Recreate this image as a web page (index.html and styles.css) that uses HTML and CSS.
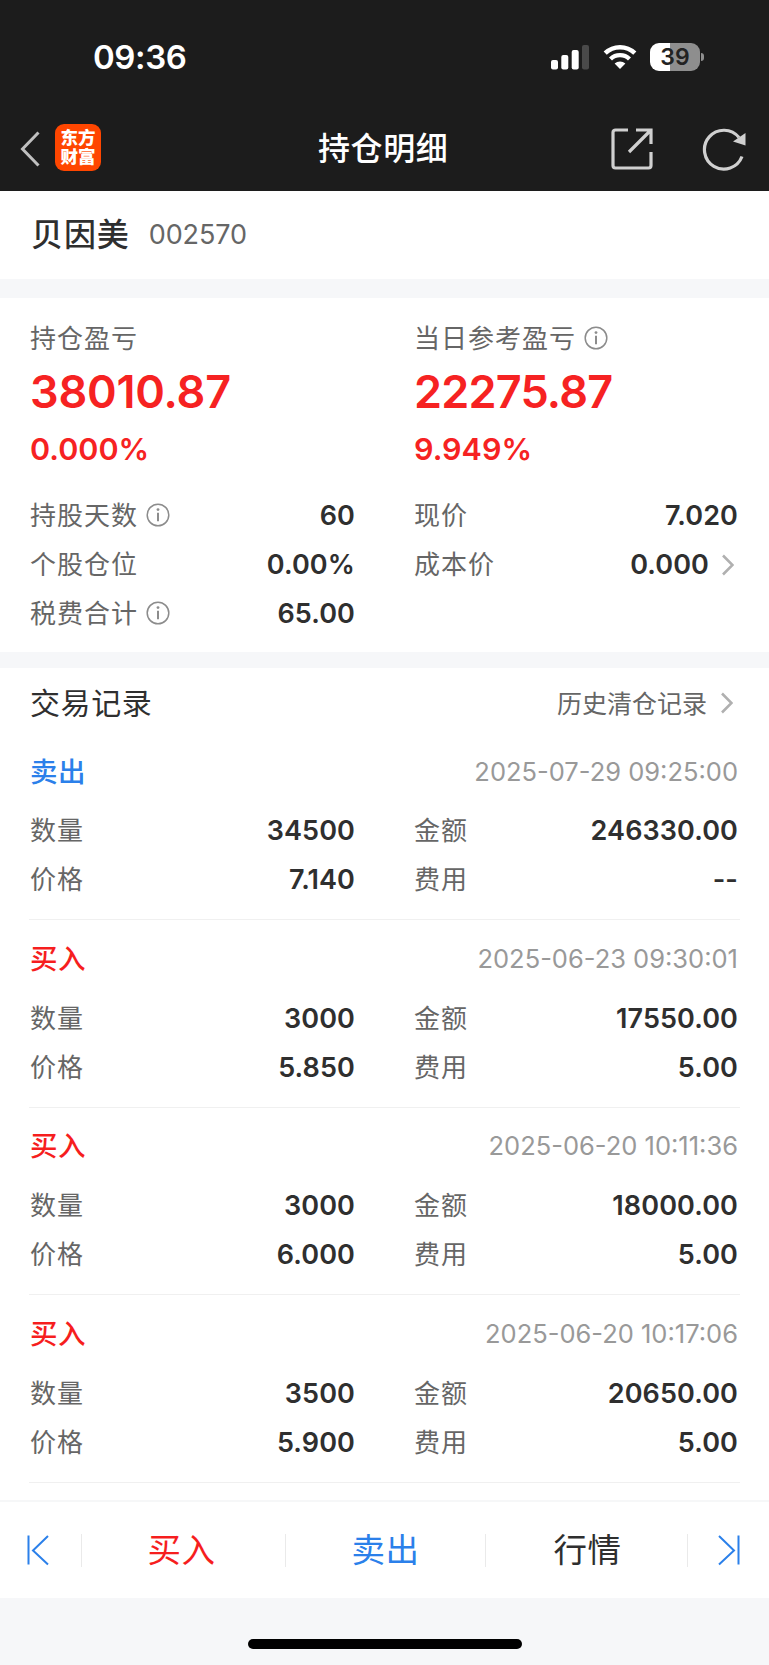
FILE: index.html
```html
<!DOCTYPE html>
<html lang="zh-CN">
<head>
<meta charset="utf-8">
<title>持仓明细</title>
<link rel="stylesheet" href="styles.css">
</head>
<body>
<svg class="defs" width="0" height="0">
  <symbol id="info" viewBox="0 0 24 24">
    <circle cx="12" cy="12" r="10.8" fill="none" stroke="#8c8c8c" stroke-width="1.5"/>
    <circle cx="12" cy="6.6" r="1.4" fill="#8c8c8c"/>
    <path d="M12 9.800v8.400" stroke="#8c8c8c" stroke-width="2" fill="none"/>
  </symbol>
  <symbol id="chev" viewBox="0 0 12 22">
    <path d="M1 1.500L10.500 11L1 20.500" fill="none" stroke="#b0b0b0" stroke-width="2.600"/>
  </symbol>
</svg>
<header class="top">
  <div class="status">
    <span class="time">09:36</span>
    <svg class="signal" width="40" height="26" viewBox="0 0 40 26">
      <rect x="1" y="16" width="7" height="9.500" rx="2" fill="#fff"/>
      <rect x="11.300" y="11" width="7" height="14.500" rx="2" fill="#fff"/>
      <rect x="21.700" y="6" width="7" height="19.500" rx="2" fill="#fff"/>
      <rect x="32" y="1" width="7" height="24.500" rx="2" fill="#4a4a4a"/>
    </svg>
    <svg class="wifi" width="34" height="26" viewBox="0 0 34 26">
      <path d="M2.200 9.200a21.300 21.300 0 0 1 29.600 0" fill="none" stroke="#fff" stroke-width="4.500"/>
      <path d="M7.500 15a13.600 13.600 0 0 1 19 0" fill="none" stroke="#fff" stroke-width="4.300"/>
      <path d="M11.600 19.500a8 8 0 0 1 10.800 0L17 25z" fill="#fff"/>
    </svg>
    <div class="battery"><span class="level">39</span><i class="cap"></i></div>
  </div>
  <nav class="nav">
    <svg class="back" width="22" height="36" viewBox="0 0 22 36"><path d="M19.500 1.500L3.500 18L19.500 34.500" fill="none" stroke="#c0c0c0" stroke-width="3"/></svg>
    <div class="logo"><span>东方</span><span>财富</span></div>
    <h1 class="title">持仓明细</h1>
    <svg class="share" width="44" height="44" viewBox="0 0 44 44">
      <path d="M18 3H5.500A2.500 2.500 0 0 0 3 5.500V38.500A2.500 2.500 0 0 0 5.500 41H38.500A2.500 2.500 0 0 0 41 38.500V25M26 3H41V17M40 4L19 25" fill="none" stroke="#d0d0d0" stroke-width="3.200"/>
    </svg>
    <svg class="reload" width="46" height="46" viewBox="0 0 46 46">
      <path d="M41 30.500A19.400 19.400 0 1 1 38 11.500" fill="none" stroke="#d0d0d0" stroke-width="3.200"/>
      <path d="M44.500 7V19.500L32 15.500z" fill="#d0d0d0"/>
    </svg>
  </nav>
</header>

<section class="stock"><span class="name">贝因美</span><span class="code">002570</span></section>

<section class="summary">
  <div class="cols">
    <div class="col">
      <div class="lab">持仓盈亏</div>
      <div class="big">38010.87</div>
      <div class="pct">0.000%</div>
      <div class="row"><span class="lab">持股天数<svg class="info"><use href="#info"/></svg></span><b class="val">60</b></div>
      <div class="row"><span class="lab">个股仓位</span><b class="val">0.00%</b></div>
      <div class="row"><span class="lab">税费合计<svg class="info"><use href="#info"/></svg></span><b class="val">65.00</b></div>
    </div>
    <div class="col">
      <div class="lab">当日参考盈亏<svg class="info"><use href="#info"/></svg></div>
      <div class="big day">22275.87</div>
      <div class="pct">9.949%</div>
      <div class="row"><span class="lab">现价</span><b class="val">7.020</b></div>
      <div class="row"><span class="lab">成本价</span><b class="val">0.000<svg class="chev"><use href="#chev"/></svg></b></div>
    </div>
  </div>
</section>

<main class="records">
  <div class="head"><h2>交易记录</h2><span class="more"><span class="link">历史清仓记录</span><svg class="chev"><use href="#chev"/></svg></span></div>
  <article class="rec">
    <div class="rhead"><span class="side sell">卖出</span><time>2025-07-29 09:25:00</time></div>
    <div class="cols">
      <div class="col"><div class="row"><span class="lab">数量</span><b class="val">34500</b></div><div class="row"><span class="lab">价格</span><b class="val">7.140</b></div></div>
      <div class="col"><div class="row"><span class="lab">金额</span><b class="val">246330.00</b></div><div class="row"><span class="lab">费用</span><b class="val">--</b></div></div>
    </div>
  </article>
  <article class="rec">
    <div class="rhead"><span class="side buy">买入</span><time>2025-06-23 09:30:01</time></div>
    <div class="cols">
      <div class="col"><div class="row"><span class="lab">数量</span><b class="val">3000</b></div><div class="row"><span class="lab">价格</span><b class="val">5.850</b></div></div>
      <div class="col"><div class="row"><span class="lab">金额</span><b class="val">17550.00</b></div><div class="row"><span class="lab">费用</span><b class="val">5.00</b></div></div>
    </div>
  </article>
  <article class="rec">
    <div class="rhead"><span class="side buy">买入</span><time>2025-06-20 10:11:36</time></div>
    <div class="cols">
      <div class="col"><div class="row"><span class="lab">数量</span><b class="val">3000</b></div><div class="row"><span class="lab">价格</span><b class="val">6.000</b></div></div>
      <div class="col"><div class="row"><span class="lab">金额</span><b class="val">18000.00</b></div><div class="row"><span class="lab">费用</span><b class="val">5.00</b></div></div>
    </div>
  </article>
  <article class="rec">
    <div class="rhead"><span class="side buy">买入</span><time>2025-06-20 10:17:06</time></div>
    <div class="cols">
      <div class="col"><div class="row"><span class="lab">数量</span><b class="val">3500</b></div><div class="row"><span class="lab">价格</span><b class="val">5.900</b></div></div>
      <div class="col"><div class="row"><span class="lab">金额</span><b class="val">20650.00</b></div><div class="row"><span class="lab">费用</span><b class="val">5.00</b></div></div>
    </div>
  </article>
</main>

<footer class="bar">
  <div class="edge left"><svg width="24" height="32" viewBox="0 0 24 32"><path d="M2.500 1.500V30.500M22 2L7 16.500L22 30.500" fill="none" stroke="#2b80ea" stroke-width="2"/></svg></div>
  <i class="sep"></i><div class="act first buy">买入</div>
  <i class="sep"></i><div class="act sell">卖出</div>
  <i class="sep"></i><div class="act last">行情</div>
  <i class="sep"></i>
  <div class="edge right"><svg width="24" height="32" viewBox="0 0 24 32"><path d="M21.500 1.500V30.500M2 2L17 16.500L2 30.500" fill="none" stroke="#2b80ea" stroke-width="2"/></svg></div>
</footer>
<div class="home"><i></i></div>
</body>
</html>
```
FILE: styles.css
```css
* { box-sizing: border-box; }
body {
  margin: 0;
  width: 769px;
  height: 1665px;
  overflow: hidden;
  display: flex;
  flex-direction: column;
  background: #fff;
  color: #2f2f2f;
  font-family: Inter, "Noto Sans CJK SC", sans-serif;
}
svg { display: block; flex: none; }
.defs { position: absolute; }
.top { height: 191px; background: #1c1c1c; color: #fff; flex: none; }
.status { height: 107px; padding: 7px 69px 0 93px; display: flex; align-items: center; }
.time { font-size: 33px; font-weight: 600; letter-spacing: -0.4px; margin-right: auto; }
.signal { margin-right: 13px; }
.wifi { margin-right: 13px; }
.battery {
  position: relative;
  width: 50px;
  height: 28px;
  border-radius: 9px;
  background: linear-gradient(90deg, #fff 0 20px, #8e8e8e 20px);
  display: flex;
  align-items: center;
  justify-content: center;
  color: #222;
  font-size: 23px;
  font-weight: 600;
}
.cap { position: absolute; left: 51px; top: 10px; width: 3px; height: 8px; border-radius: 0 4px 4px 0; background: #8e8e8e; }
.nav { height: 84px; padding: 0 22px 1px 19px; display: flex; align-items: center; }
.back { margin-right: 14px; }
.logo {
  width: 46px;
  height: 47px;
  margin-bottom: 2px;
  border-radius: 9px;
  background: #ff4600;
  display: flex;
  flex-direction: column;
  align-items: center;
  justify-content: center;
  padding-bottom: 2px;
  font-size: 17.500px;
  line-height: 19px;
  font-weight: 900;
}
.logo span { height: 19px; }
.title { margin: 1px auto 0 217px; font-size: 32px; line-height: 40px; font-weight: 500; letter-spacing: .6px; }
.share { margin-right: 47px; }
.stock { height: 88px; flex: none; display: flex; align-items: center; padding-left: 31px; }
.name { padding-bottom: 6px; font-size: 32px; font-weight: 500; letter-spacing: .9px; }
.code { padding-bottom: 2px; margin-left: 19px; font-size: 27px; letter-spacing: -.1px; color: #666; }
.summary { height: 389px; flex: none; border: solid #f6f7f9; border-width: 19px 0 16px; padding: 20px 30px 0; }
.cols { display: flex; gap: 59px; }
.col { width: 325px; }
.col + .col { width: 324px; }
.lab { display: flex; align-items: center; height: 40px; padding-bottom: 4px; font-size: 26px; letter-spacing: 1px; color: #666; }
.info { width: 24px; height: 24px; margin: 3px 0 0 8px; }
.big { height: 68px; line-height: 68px; font-size: 45px; font-weight: 600; letter-spacing: -.2px; color: #f62222; }
.day { letter-spacing: -.8px; }
.pct { height: 65px; line-height: 46px; font-size: 30.500px; font-weight: 600; color: #f62222; }
.row { height: 49px; display: flex; align-items: center; justify-content: space-between; }
.val { display: flex; align-items: center; font-size: 27px; font-weight: 600; letter-spacing: .1px; }
.chev { width: 12px; height: 22px; margin: 0 4px 0 13px; }
.records { height: 832px; flex: none; padding: 0 29px; }
.head { height: 72px; padding: 0 1px 2px; display: flex; align-items: center; justify-content: space-between; }
.head h2 { margin: 0; padding-bottom: 4px; font-size: 30px; font-weight: 400; letter-spacing: .6px; }
.more { display: flex; align-items: center; font-size: 25px; color: #666; }
.more .link { padding-bottom: 3px; }
.more .chev { margin-left: 14px; margin-right: 6px; }
.rec { height: 187.600px; padding: 0 1px; border-bottom: 1px solid #f0f0f0; }
.rec:first-of-type { height: 180px; }
.rec .rhead { height: 73.500px; padding-top: 3px; }
.rec:first-of-type .rhead { height: 66px; padding: 0 1px 4px 0; }
.rhead { display: flex; align-items: center; justify-content: space-between; padding-right: 1px; }
.side { padding-bottom: 3px; font-size: 27.500px; font-weight: 500; letter-spacing: .6px; }
.rhead time { font-size: 25.500px; color: #999; }
.buy { color: #f61e1e; }
.sell { color: #2b80ea; }
.bar { height: 98px; flex: none; border-top: 2px solid #f6f7f8; display: flex; align-items: center; }
.edge { width: 81px; }
.left { padding-left: 26px; }
.right { padding-left: 29px; }
.sep { width: 1px; height: 33px; background: #eaeaea; }
.act { flex: 1; padding-bottom: 5px; text-align: center; font-size: 33.500px; letter-spacing: .5px; }
.act.first { padding-right: 4px; }
.act.last { padding-left: 2px; }
.home { flex: 1; background: #f6f7f9; display: flex; justify-content: center; padding-top: 41px; }
.home i { width: 274px; height: 10px; border-radius: 5px; background: #000; }
```
